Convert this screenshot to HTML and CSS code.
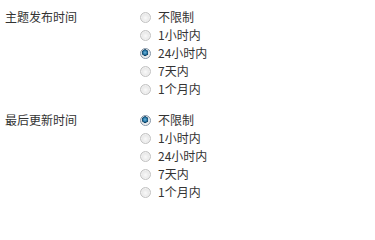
FILE: index.html
```html
<!DOCTYPE html>
<html lang="zh-CN">
<head>
<meta charset="utf-8">
<link rel="stylesheet" href="styles.css">
</head>
<body>
<div class="form">
  <div class="group">
    <div class="label">主题发布时间</div>
    <div class="options">
      <label class="opt"><input type="radio" name="a"><span>不限制</span></label>
      <label class="opt"><input type="radio" name="a"><span>1小时内</span></label>
      <label class="opt"><input type="radio" name="a" checked><span>24小时内</span></label>
      <label class="opt"><input type="radio" name="a"><span>7天内</span></label>
      <label class="opt"><input type="radio" name="a"><span>1个月内</span></label>
    </div>
  </div>
  <div class="group">
    <div class="label">最后更新时间</div>
    <div class="options">
      <label class="opt"><input type="radio" name="b" checked><span>不限制</span></label>
      <label class="opt"><input type="radio" name="b"><span>1小时内</span></label>
      <label class="opt"><input type="radio" name="b"><span>24小时内</span></label>
      <label class="opt"><input type="radio" name="b"><span>7天内</span></label>
      <label class="opt"><input type="radio" name="b"><span>1个月内</span></label>
    </div>
  </div>
</div>
</body>
</html>
```

FILE: styles.css
```css
html, body {
  margin: 0;
  padding: 0;
  background: #ffffff;
}
body {
  font-family: "Noto Sans CJK SC", "Noto Sans", sans-serif;
  font-size: 12px;
  color: #333333;
}
.form {
  padding: 8px 0 0 5px;
  display: flex;
  flex-direction: column;
  gap: 13px;
}
.group {
  display: flex;
}
.label {
  width: 135px;
  line-height: 18px;
}
.options {
  display: flex;
  flex-direction: column;
}
.opt {
  display: flex;
  align-items: center;
  height: 18px;
  line-height: 18px;
}
.opt input {
  -webkit-appearance: none;
  appearance: none;
  margin: 0 7px 0 0;
  width: 11px;
  height: 11px;
  border-radius: 50%;
  border: 1px solid #c2c2c2;
  box-sizing: border-box;
  background: radial-gradient(circle at 50% 55%, #fafafa 0, #e8e8e8 55%, #d6d6d6 100%);
  box-shadow: inset 0 0 0 1px #f2f2f2;
}
.opt input:checked {
  border-color: #8595a6;
  background: radial-gradient(circle at 45% 40%, #6fb6dc 0, #1f6f9f 30%, #0b3a5a 42%, #d8e0e6 46%, #f2f2f2 70%, #d6d6d6 100%);
  box-shadow: none;
}
```
